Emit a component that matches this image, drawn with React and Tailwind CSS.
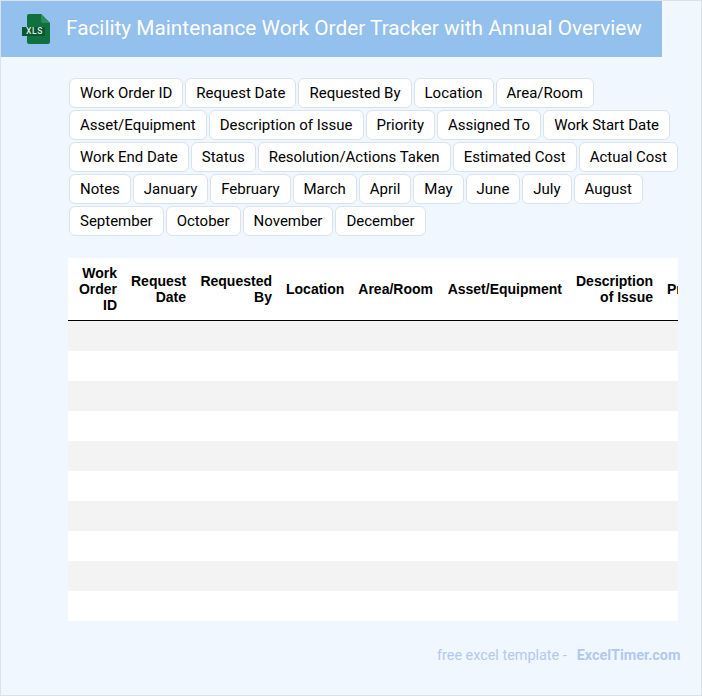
import React from 'react'

const fields = [
  'Work Order ID', 'Request Date', 'Requested By', 'Location', 'Area/Room',
  'Asset/Equipment', 'Description of Issue', 'Priority', 'Assigned To', 'Work Start Date',
  'Work End Date', 'Status', 'Resolution/Actions Taken', 'Estimated Cost', 'Actual Cost',
  'Notes', 'January', 'February', 'March', 'April', 'May', 'June', 'July', 'August',
  'September', 'October', 'November', 'December',
]

const columns = [
  { label: 'Work Order ID', width: 'w-[56px]' },
  { label: 'Request Date', width: 'w-[69px]' },
  { label: 'Requested By', width: 'w-[86px]' },
  { label: 'Location', width: 'w-[72px]' },
  { label: 'Area/Room', width: 'w-[89px]' },
  { label: 'Asset/Equipment', width: 'w-[129px]' },
  { label: 'Description of Issue', width: 'w-[91px]' },
  { label: 'Priority', width: 'w-[63px]' },
]

const rows = [0, 1, 2, 3, 4, 5, 6, 7, 8, 9]

function XlsIcon() {
  return (
    <svg width="30" height="32" viewBox="0 0 30 32" className="shrink-0">
      <path d="M8 1h12l9 9v19a2 2 0 0 1-2 2H8a2 2 0 0 1-2-2V3a2 2 0 0 1 2-2z" fill="#107040" />
      <path d="M20 1l9 9h-7a2 2 0 0 1-2-2z" fill="#2c8c5c" />
      <rect x="1" y="14" width="23" height="9" fill="#0b5530" />
      <text x="5" y="21.2" fontSize="8.5" fontWeight="500" fill="#dcefe4" fontFamily="Roboto, sans-serif" letterSpacing="0.6">XLS</text>
    </svg>
  )
}

export default function App() {
  return (
    <div className="w-[702px] h-[696px] overflow-hidden border border-[#dae3ec] bg-[#f0f7ff] font-['Roboto',sans-serif]">
      {/* Header */}
      <div className="w-[661px] h-[56px] bg-[#93c0ec] flex items-center pl-[20px] gap-[15px]">
        <XlsIcon />
        <h1 className="text-[20.8px] leading-[26px] mb-[3px] text-white whitespace-nowrap">Facility Maintenance Work Order Tracker with Annual Overview</h1>
      </div>

      {/* Field chips */}
      <div className="mt-[21px] ml-[68px] w-[612px] flex flex-wrap gap-x-[2px] gap-y-[2px]">
        {fields.map((field) => (
          <span
            key={field}
            className="h-[30px] px-[10px] flex items-center bg-white border border-[#dae3ec] rounded-[6px] text-[14.99px] text-black whitespace-nowrap"
          >
            {field}
          </span>
        ))}
      </div>

      {/* Table */}
      <div className="mt-[22px] ml-[67px] w-[610px] overflow-hidden bg-white">
        <table className="table-fixed border-separate border-spacing-0 w-[655px] font-['Liberation_Sans',sans-serif]">
          <colgroup>
            {columns.map((col) => (
              <col key={col.label} className={col.width} />
            ))}
          </colgroup>
          <thead>
            <tr className="h-[63px]">
              {columns.map((col) => (
                <th key={col.label} className="px-[7px] border-b border-black text-right align-middle text-[14px] leading-[16px] font-bold text-black">
                  {col.label}
                </th>
              ))}
            </tr>
          </thead>
          <tbody>
            {rows.map((row) => (
              <tr key={row} className={row % 2 === 0 ? 'h-[30px] bg-[#f3f3f3]' : 'h-[30px] bg-white'}>
                {columns.map((col) => (
                  <td key={col.label}></td>
                ))}
              </tr>
            ))}
          </tbody>
        </table>
      </div>

      {/* Footer */}
      <div className="mt-[26px] ml-[436px] flex items-center h-[18px] text-[14.4px] text-[#b3c7f3] whitespace-nowrap">
        <span>free excel template -</span>
        <span className="ml-[10px] font-bold">ExcelTimer.com</span>
      </div>
    </div>
  )
}
